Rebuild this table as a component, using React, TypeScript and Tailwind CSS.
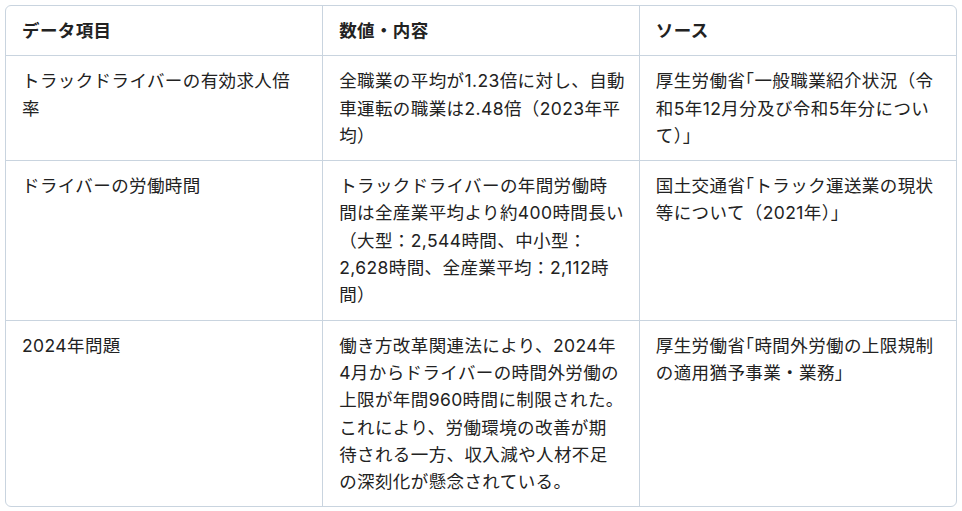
import React from 'react';

type Row = {
  item: string[];
  value: string[];
  source: string[];
};

// Lines are broken where the reference breaks them.
const rows: Row[] = [
  {
    item: ['トラックドライバーの有効求人倍', '率'],
    value: ['全職業の平均が1.23倍に対し、自動', '車運転の職業は2.48倍（2023年平', '均）'],
    source: ['厚生労働省｢一般職業紹介状況（令', '和5年12月分及び令和5年分につい', 'て）」'],
  },
  {
    item: ['ドライバーの労働時間'],
    value: [
      'トラックドライバーの年間労働時',
      '間は全産業平均より約400時間長い',
      '（大型：2,544時間、中小型：',
      '2,628時間、全産業平均：2,112時',
      '間）',
    ],
    source: ['国土交通省｢トラック運送業の現状', '等について（2021年）」'],
  },
  {
    item: ['2024年問題'],
    value: [
      '働き方改革関連法により、2024年',
      '4月からドライバーの時間外労働の',
      '上限が年間960時間に制限された。',
      'これにより、労働環境の改善が期',
      '待される一方、収入減や人材不足',
      'の深刻化が懸念されている。',
    ],
    source: ['厚生労働省｢時間外労働の上限規制', 'の適用猶予事業・業務」'],
  },
];

const cell = 'px-4 py-[11px] align-top border-[#c9d4df]';

function Lines({ lines }: { lines: string[] }) {
  return (
    <>
      {lines.map((l, i) => (
        <span key={i} className="block whitespace-nowrap">
          {l}
        </span>
      ))}
    </>
  );
}

export default function App() {
  return (
    <div
      className="w-[962px] h-[511px] bg-white p-[5px] text-[#222] text-[17.5px] leading-[27.3px] tracking-[0.4px]"
      style={{ fontFamily: 'Inter, "Noto Sans CJK JP", sans-serif' }}
    >
      <div className="rounded-md border border-[#c9d4df] overflow-hidden">
        <table className="w-full table-fixed border-collapse">
          <thead>
            <tr>
              <th className={`${cell} text-left font-bold border-b border-r`}>データ項目</th>
              <th className={`${cell} text-left font-bold border-b border-r`}>数値・内容</th>
              <th className={`${cell} text-left font-bold border-b`}>ソース</th>
            </tr>
          </thead>
          <tbody>
            {rows.map((row, i) => {
              const last = i === rows.length - 1;
              return (
                <tr key={i}>
                  <td className={`${cell} border-r ${last ? '' : 'border-b'}`}>
                    <Lines lines={row.item} />
                  </td>
                  <td className={`${cell} border-r ${last ? '' : 'border-b'}`}>
                    <Lines lines={row.value} />
                  </td>
                  <td className={`${cell} ${last ? '' : 'border-b'}`}>
                    <Lines lines={row.source} />
                  </td>
                </tr>
              );
            })}
          </tbody>
        </table>
      </div>
    </div>
  );
}
